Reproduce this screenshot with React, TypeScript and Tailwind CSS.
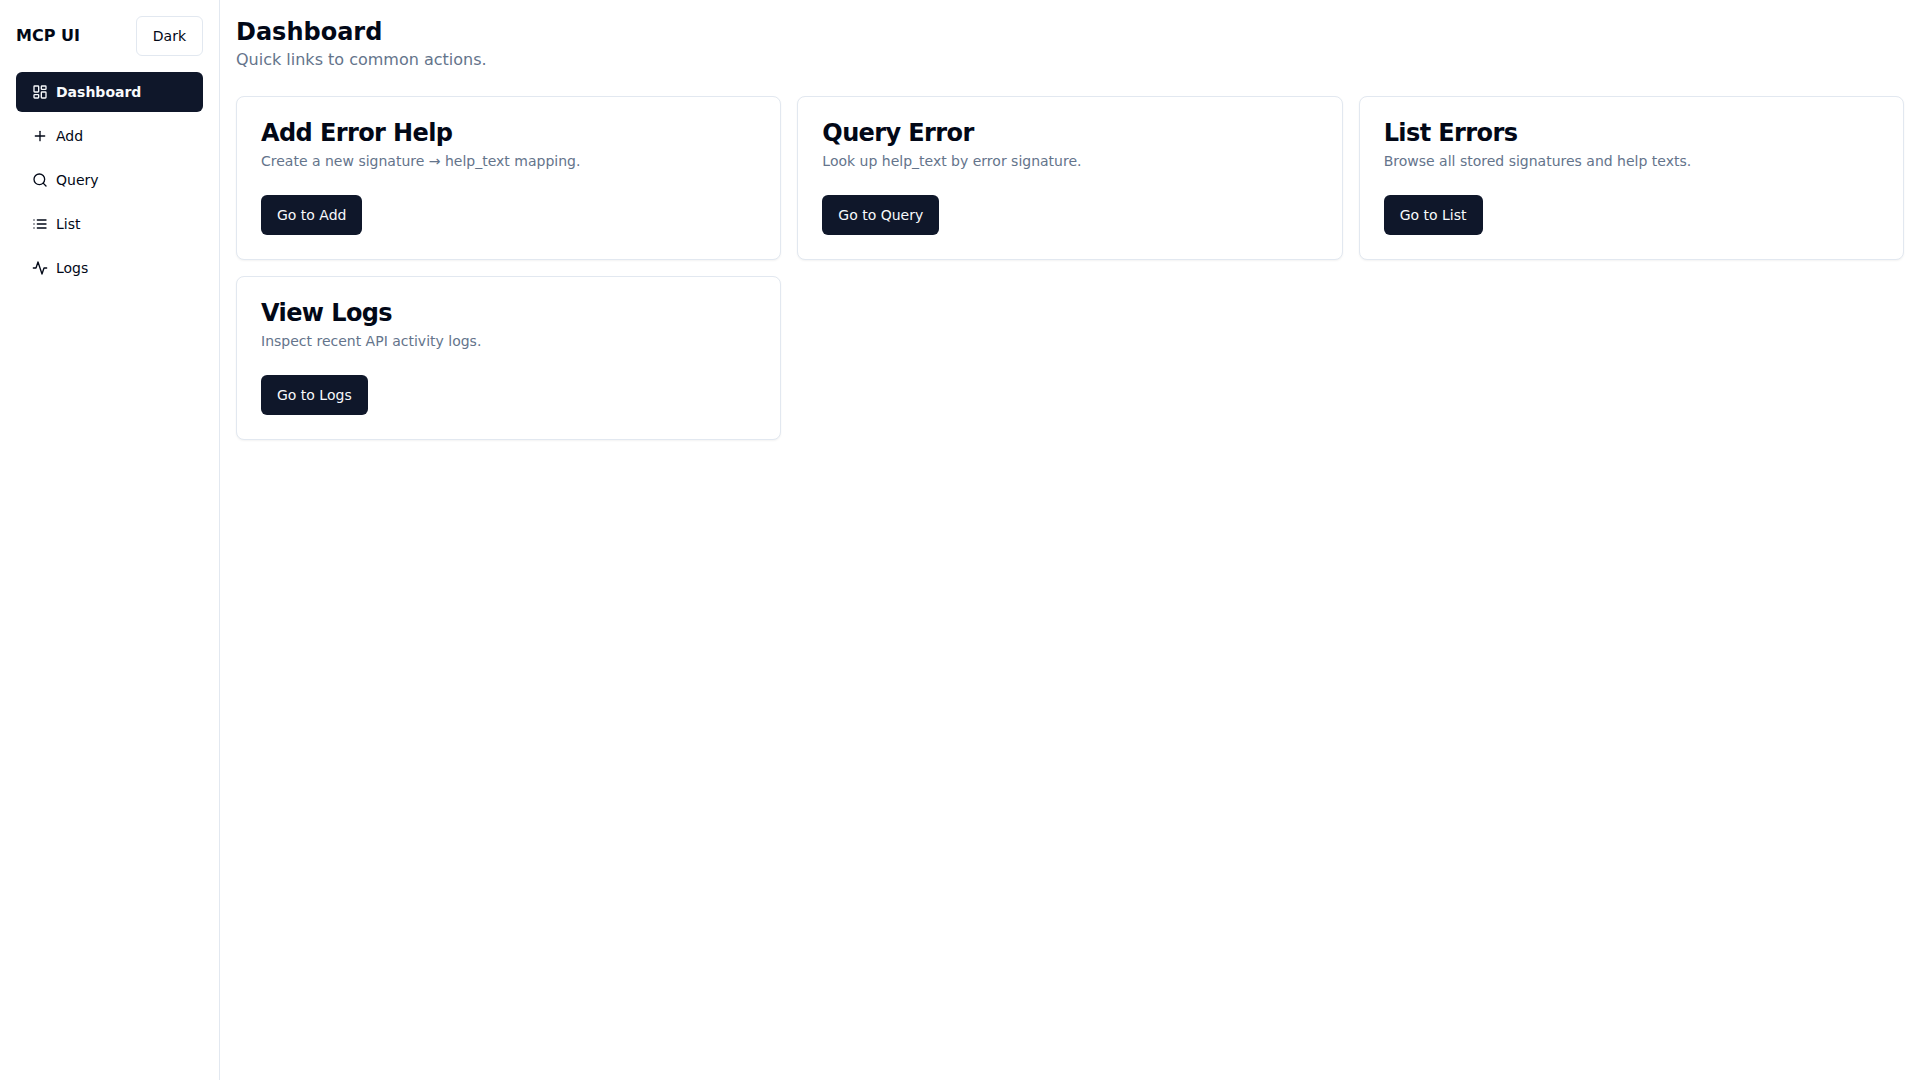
import { LayoutDashboard, Plus } from "lucide-react";

const font = "font-['DejaVu_Sans',sans-serif]";

function IconSvg({ paths }: { paths: string[] }) {
  return (
    <svg
      viewBox="0 0 24 24"
      fill="none"
      stroke="currentColor"
      strokeWidth={2}
      strokeLinecap="round"
      strokeLinejoin="round"
      className="h-4 w-4"
    >
      {paths.map((d) => (
        <path key={d} d={d} />
      ))}
    </svg>
  );
}

const SearchIcon = () => <IconSvg paths={["M19 11a8 8 0 1 1-16 0 8 8 0 0 1 16 0Z", "m21 21-4.3-4.3"]} />;
const ListIcon = () => <IconSvg paths={["M3 6h.01", "M3 12h.01", "M3 18h.01", "M8 6h13", "M8 12h13", "M8 18h13"]} />;
const ActivityIcon = () => <IconSvg paths={["M22 12h-4l-3 9L9 3l-3 9H2"]} />;

const navItems = [
  { label: "Dashboard", icon: LayoutDashboard, active: true },
  { label: "Add", icon: Plus },
  { label: "Query", icon: SearchIcon },
  { label: "List", icon: ListIcon },
  { label: "Logs", icon: ActivityIcon },
];

const cards = [
  { title: "Add Error Help", text: "Create a new signature → help_text mapping.", action: "Go to Add" },
  { title: "Query Error", text: "Look up help_text by error signature.", action: "Go to Query" },
  { title: "List Errors", text: "Browse all stored signatures and help texts.", action: "Go to List" },
  { title: "View Logs", text: "Inspect recent API activity logs.", action: "Go to Logs" },
];

function Sidebar() {
  return (
    <aside className="w-[220px] shrink-0 border-r border-[#e2e8f0] p-4">
      <div className="mb-4 flex items-center justify-between">
        <span className="text-base font-bold">MCP UI</span>
        <button className="h-10 rounded-md border border-[#e2e8f0] bg-white px-4 text-sm">Dark</button>
      </div>
      <nav className="flex flex-col gap-1">
        {navItems.map(({ label, icon: Icon, active }) => (
          <a
            key={label}
            className={
              active
                ? "flex h-10 items-center gap-2 rounded-md bg-[#0f172a] px-4 text-sm font-semibold text-[#f8fafc]"
                : "flex h-10 items-center gap-2 rounded-md px-4 text-sm text-[#020817]"
            }
          >
            <Icon className="h-4 w-4" />
            {label}
          </a>
        ))}
      </nav>
    </aside>
  );
}

export default function App() {
  return (
    <div className={`flex min-h-screen bg-white text-[#020817] antialiased ${font}`}>
      <Sidebar />
      <main className="min-w-0 flex-1 p-4">
        <h1 className="text-2xl leading-8 font-bold">Dashboard</h1>
        <p className="mb-6 text-base leading-6 text-[#64748b]">Quick links to common actions.</p>
        <div className="grid grid-cols-3 gap-4">
          {cards.map((card) => (
            <section key={card.title} className="rounded-lg border border-[#e2e8f0] bg-white shadow-xs">
              <div className="flex flex-col gap-1.5 p-6">
                <h3 className="text-2xl leading-none font-semibold tracking-tight">{card.title}</h3>
                <p className="text-sm text-[#64748b]">{card.text}</p>
              </div>
              <div className="p-6 pt-0">
                <button className="h-10 rounded-md bg-[#0f172a] px-4 text-sm text-[#f8fafc]">{card.action}</button>
              </div>
            </section>
          ))}
        </div>
      </main>
    </div>
  );
}
